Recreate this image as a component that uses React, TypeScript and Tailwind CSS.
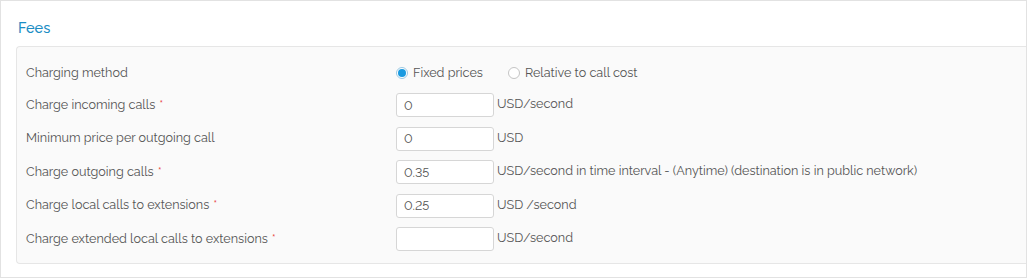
import React from "react";

type Row = {
  label: string;
  required?: boolean;
  value?: string;
  unit?: string;
};

const rows: Row[] = [
  { label: "Charge incoming calls", required: true, value: "0", unit: "USD/second" },
  { label: "Minimum price per outgoing call", value: "0", unit: "USD" },
  {
    label: "Charge outgoing calls",
    required: true,
    value: "0.35",
    unit: "USD/second in time interval - (Anytime) (destination is in public network)",
  },
  { label: "Charge local calls to extensions", required: true, value: "0.25", unit: "USD /second" },
  { label: "Charge extended local calls to extensions", required: true, value: "", unit: "USD/second" },
];

const Radio = ({ checked, label }: { checked?: boolean; label: string }) => (
  <label className="flex items-center gap-[5px]">
    <span
      className={
        checked
          ? "flex h-[12px] w-[12px] items-center justify-center rounded-full border border-[#9cc9e3] bg-white"
          : "h-[12px] w-[12px] rounded-full border border-[#c4c4c4] bg-white"
      }
    >
      {checked && <span className="h-[8px] w-[8px] rounded-full bg-[#1a9ae0]" />}
    </span>
    <span>{label}</span>
  </label>
);

export default function App() {
  return (
    <div
      className="h-[278px] w-[1027px] border border-[#e2e2e2] bg-white text-[12.6px] text-[#555] lining-nums"
      style={{ fontFamily: "Raleway, 'Open Sans', 'Liberation Sans', sans-serif" }}
    >
      <div className="pl-[17px] pt-[18px] text-[14.5px] font-medium leading-[18px] text-[#1b8dc4]">Fees</div>
      <div className="ml-[15px] mt-[9px] h-[218px] rounded-l-[4px] border border-r-0 border-[#e6e6e6] bg-[#fafafa] pl-[9px] pt-[14px]">
        <div className="flex h-[24px] items-center">
          <div className="w-[370px]">Charging method</div>
          <div className="flex items-center gap-[25px]">
            <Radio checked label="Fixed prices" />
            <Radio label="Relative to call cost" />
          </div>
        </div>
        {rows.map((r, i) => (
          <div key={r.label} className={`${i === 0 ? "mt-[8px]" : "mt-[9.5px]"} flex h-[24px] items-center`}>
            <div className="w-[370px]">
              {r.label}
              {r.required && <span className="ml-[4px] text-[#e8413f]">*</span>}
            </div>
            <input
              readOnly
              value={r.value}
              className="h-[24px] w-[98px] rounded-[3px] border border-[#d6d6d6] bg-white px-[7px] text-[12.6px] text-[#555] lining-nums outline-none"
            />
            <span className="mb-[2px] ml-[3px] leading-[18px]">{r.unit}</span>
          </div>
        ))}
      </div>
    </div>
  );
}
